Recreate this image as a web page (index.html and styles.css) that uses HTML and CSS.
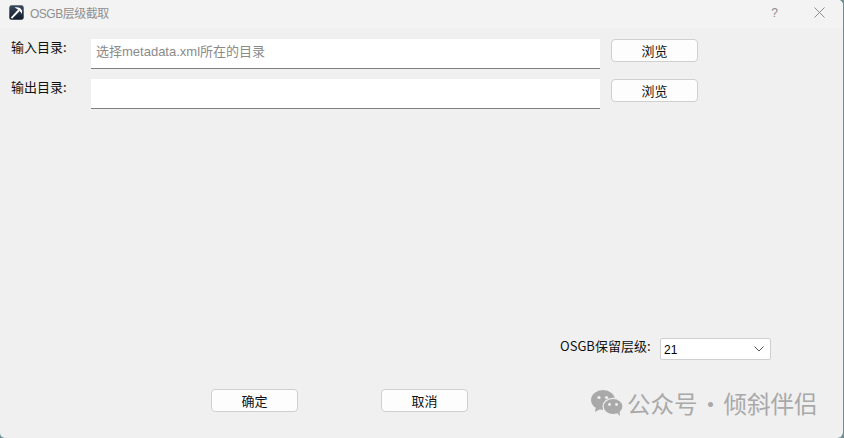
FILE: index.html
```html
<!DOCTYPE html>
<html lang="zh">
<head>
<meta charset="utf-8">
<title>OSGB层级截取</title>
<link rel="stylesheet" href="styles.css">
</head>
<body>
<div class="window">
  <header class="titlebar">
    <svg class="app-icon" viewBox="0 0 16 16" width="15" height="15" aria-hidden="true">
      <defs>
        <linearGradient id="iconbg" x1="0" y1="0" x2="0" y2="1">
          <stop offset="0" stop-color="#3c4a5e"/>
          <stop offset="1" stop-color="#121a28"/>
        </linearGradient>
      </defs>
      <rect x="0.3" y="0.3" width="15.4" height="15.4" rx="2.5" fill="url(#iconbg)"/>
      <path d="M2.6 14 L10.6 5.6" stroke="#fff" stroke-width="2" fill="none"/>
      <path d="M6 2.6 C9.5 1.8 12.6 3 14 6 L13.6 9.6 C12.6 7 10 4.4 6 2.6 Z" fill="#fff"/>
    </svg>
    <span class="title">OSGB层级截取</span>
    <span class="help">?</span>
    <svg class="close" viewBox="0 0 11 11" width="11" height="11" aria-hidden="true">
      <path d="M0.5 0.5 L10.5 10.5 M10.5 0.5 L0.5 10.5" stroke="#8c8c8c" stroke-width="1" fill="none"/>
    </svg>
  </header>
  <main class="content">
    <div class="row">
      <label class="label">输入目录:</label>
      <div class="field placeholder">选择metadata.xml所在的目录</div>
      <button class="btn browse">浏览</button>
    </div>
    <div class="row">
      <label class="label">输出目录:</label>
      <div class="field"></div>
      <button class="btn browse">浏览</button>
    </div>
    <div class="spacer"></div>
    <div class="level-row">
      <span class="level-label">OSGB保留层级:</span>
      <div class="combo">
        <span class="combo-value">21</span>
        <svg viewBox="0 0 10 6" width="10" height="6" aria-hidden="true">
          <path d="M0.5 0.5 L5 5 L9.5 0.5" stroke="#555" stroke-width="1" fill="none"/>
        </svg>
      </div>
    </div>
    <div class="actions">
      <button class="btn">确定</button>
      <button class="btn">取消</button>
    </div>
  </main>
  <div class="watermark">
    <svg viewBox="0 0 32 26" width="32" height="26" aria-hidden="true">
      <ellipse cx="12" cy="10" rx="12" ry="10" fill="#a9a9a9"/>
      <path d="M5 16 L4 22 L11 18 Z" fill="#a9a9a9"/>
      <ellipse cx="22" cy="16.5" rx="10" ry="8.2" fill="#a9a9a9" stroke="#f0f0f0" stroke-width="1.2"/>
      <path d="M26 23 L29 26 L28.5 21 Z" fill="#a9a9a9"/>
      <circle cx="8" cy="7.5" r="1.6" fill="#f0f0f0"/>
      <circle cx="15.5" cy="7.5" r="1.6" fill="#f0f0f0"/>
      <circle cx="18.5" cy="14.5" r="1.4" fill="#f0f0f0"/>
      <circle cx="25.5" cy="14.5" r="1.4" fill="#f0f0f0"/>
    </svg>
    <span>公众号<span class="dot">·</span>倾斜伴侣</span>
  </div>
</div>
</body>
</html>
```

FILE: styles.css
```css
* { box-sizing: border-box; }
html, body { margin: 0; height: 100%; background: #6f8f95; }
body { overflow: hidden; font-family: "Noto Sans CJK SC", "Liberation Sans", sans-serif; }
.window {
  position: relative;
  width: 843px;
  height: 438px;
  background: #f0f0f0;
  border-radius: 1px 5px 6px 5px;
  display: flex;
  flex-direction: column;
  overflow: hidden;
}
.titlebar {
  height: 28px;
  flex: none;
  background: #f3f3f3;
  display: flex;
  align-items: center;
  padding: 0 18px 3px 9px;
}
.app-icon { flex: none; margin-right: 6px; }
.title { font-size: 12px; letter-spacing: -0.5px; color: #8f8f8f; flex: 1; font-family: "Liberation Sans", "Noto Sans CJK SC", sans-serif; }
.help { font-size: 12px; color: #8c8c8c; margin-right: 36px; font-family: "Liberation Sans", sans-serif; }
.close { flex: none; }
.content {
  flex: 1;
  display: flex;
  flex-direction: column;
  padding: 11px 0 26px 11px;
}
.row { display: flex; align-items: flex-start; height: 30px; margin-bottom: 10px; }
.label { width: 80px; font-size: 13px; font-weight: 400; line-height: 16px; color: #111; flex: none; }
.field {
  width: 509px;
  height: 30px;
  background: #fff;
  border-bottom: 1px solid #808080;
  font-size: 13px;
  line-height: 25px;
  padding: 0 5px;
  flex: none;
}
.placeholder { color: #8a8a8a; font-family: "Liberation Sans", "Noto Sans CJK SC", sans-serif; }
.btn {
  width: 87px;
  height: 23px;
  padding: 0;
  background: #fdfdfd;
  border: 1px solid #cfcfcf;
  border-radius: 4px;
  font: 13px "Noto Sans CJK SC", sans-serif;
  color: #111;
}
.browse { margin-left: 11px; flex: none; }
.spacer { flex: 1; }
.level-row { display: flex; align-items: flex-start; padding-left: 549px; height: 22px; }
.level-label { width: 100px; font-size: 13px; line-height: 16px; color: #111; }
.combo {
  width: 111px;
  height: 22px;
  background: #fff;
  border: 1px solid #cfcfcf;
  border-radius: 2px;
  display: flex;
  align-items: center;
  justify-content: space-between;
  padding: 0 3px;
  font: 12px "Liberation Sans", sans-serif;
  color: #000;
}
.combo-value { padding-top: 1px; }
.combo svg { margin-right: 3px; }
.actions { display: flex; gap: 83px; padding-left: 200px; margin-top: 29px; }
.watermark {
  position: absolute;
  left: 591px;
  top: 390px;
  display: flex;
  align-items: center;
  gap: 4px;
  color: #a9a9a9;
  font-size: 23.5px;
  line-height: 26px;
  white-space: nowrap;
}
.dot { display: inline-block; width: 26px; text-align: center; }
```
